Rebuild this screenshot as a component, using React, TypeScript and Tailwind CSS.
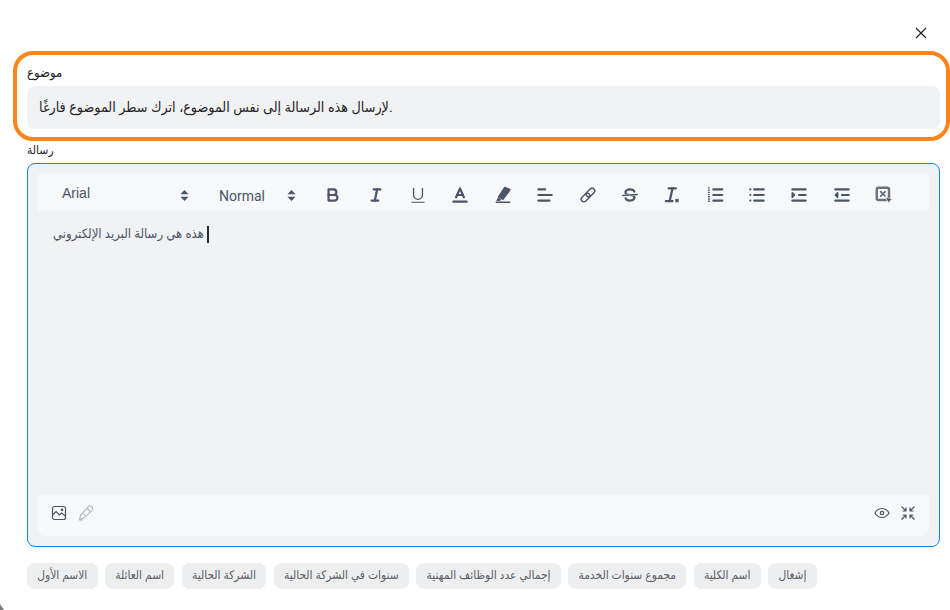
import type { ReactNode } from 'react';

const font = "font-['Roboto','DejaVu_Sans_Condensed',sans-serif]";

const chips = [
  'الاسم الأول',
  'اسم العائلة',
  'الشركة الحالية',
  'سنوات في الشركة الحالية',
  'إجمالي عدد الوظائف المهنية',
  'مجموع سنوات الخدمة',
  'اسم الكلية',
  'إشغال',
];

function Icon({ children }: { children: ReactNode }) {
  return (
    <svg viewBox="0 0 18 18" className="h-5 w-5 fill-none stroke-[#4a5568] stroke-2" strokeLinecap="round" strokeLinejoin="round">
      {children}
    </svg>
  );
}

const tools: ReactNode[] = [
  <>
    <path d="M5,4H9.5A2.5,2.5,0,0,1,12,6.5v0A2.5,2.5,0,0,1,9.5,9H5V4Z" />
    <path d="M5,9h5.5A2.5,2.5,0,0,1,13,11.5v0A2.5,2.5,0,0,1,10.5,14H5V9Z" />
  </>,
  <>
    <line x1="7" x2="13" y1="4" y2="4" />
    <line x1="5" x2="11" y1="14" y2="14" />
    <line x1="8" x2="10" y1="14" y2="4" />
  </>,
  <>
    <path strokeWidth="1.2" d="M5,3V9a4,4,0,0,0,4,4H9a4,4,0,0,0,4-4V3" />
    <rect x="3" y="15" width="12" height="1" rx="0.5" stroke="none" fill="#4a5568" />
  </>,
  <>
    <line x1="3" x2="15" y1="15" y2="15" />
    <polyline points="5.5 11 9 3 12.5 11" />
    <line x1="11.63" x2="6.38" y1="9" y2="9" />
  </>,
  <>
    <line x1="3" x2="15" y1="15.500" y2="15.500" strokeWidth="1.4" />
    <polygon points="10.5,2 15.5,4 14,6.500 9,13 5,10.500" fill="#4a5568" stroke="#4a5568" strokeWidth="1" />
    <polygon points="4.500,11 7.500,13 6,14.500 3,14.500" fill="#4a5568" stroke="none" />
  </>,
  <>
    <line x1="3" x2="15" y1="9" y2="9" />
    <line x1="3" x2="13" y1="14" y2="14" />
    <line x1="3" x2="9" y1="4" y2="4" />
  </>,
  <g strokeWidth="1.3">
    <rect x="2.300" y="8.800" width="9" height="4.800" rx="2.400" transform="rotate(-45 6.800 11.200)" />
    <rect x="6.700" y="4.400" width="9" height="4.800" rx="2.400" transform="rotate(-45 11.200 6.800)" />
  </g>,
  <>
    <line x1="15.5" x2="2.5" y1="8.5" y2="9.5" strokeWidth="1.3" />
    <path stroke="none" fill="#4a5568" d="M9.007,8C6.542,7.791,6,7.519,6,6.5,6,5.792,7.283,5,9,5c1.571,0,2.765.679,2.969,1.309a1,1,0,0,0,1.9-.617C13.356,4.106,11.354,3,9,3,6.2,3,4,4.538,4,6.5a3.2,3.2,0,0,0,.5,1.843Z" />
    <path stroke="none" fill="#4a5568" d="M8.984,10C11.457,10.208,12,10.479,12,11.5c0,.708-1.283,1.5-3,1.5-1.571,0-2.765-.679-2.969-1.309a1,1,0,1,0-1.9.617C4.644,13.894,6.646,15,9,15c2.8,0,5-1.538,5-3.5a3.2,3.2,0,0,0-.5-1.843Z" />
  </>,
  <>
    <line x1="6" x2="12.500" y1="3" y2="3" />
    <line x1="7" x2="9.500" y1="14" y2="3" />
    <line x1="3.500" x2="9.500" y1="14.500" y2="14.500" />
    <rect x="12" y="12.500" width="3" height="3" stroke="none" fill="#4a5568" />
  </>,
  <>
    <line x1="7.500" x2="15.500" y1="4" y2="4" />
    <line x1="7.500" x2="15.500" y1="9" y2="9" />
    <line x1="7.500" x2="15.500" y1="14" y2="14" />
    <line x1="3.500" x2="3.500" y1="2" y2="16" strokeWidth="1.6" strokeDasharray="1.2 0.8" strokeLinecap="butt" />
  </>,
  <>
    <line x1="6.500" x2="15" y1="4" y2="4" />
    <line x1="6.500" x2="15" y1="9" y2="9" />
    <line x1="6.500" x2="15" y1="14" y2="14" />
    <line x1="3" x2="3" y1="4" y2="4" />
    <line x1="3" x2="3" y1="9" y2="9" />
    <line x1="3" x2="3" y1="14" y2="14" />
  </>,
  <>
    <line x1="3" x2="15" y1="14" y2="14" />
    <line x1="3" x2="15" y1="4" y2="4" />
    <line x1="9" x2="15" y1="9" y2="9" />
    <polyline points="3 7 3 11 5 9 3 7" fill="#4a5568" strokeWidth="1.500" />
  </>,
  <>
    <line x1="3" x2="15" y1="14" y2="14" />
    <line x1="3" x2="15" y1="4" y2="4" />
    <line x1="9" x2="15" y1="9" y2="9" />
    <polyline points="5 7 5 11 3 9 5 7" fill="#4a5568" strokeWidth="1.500" />
  </>,
  <>
    <rect x="2.500" y="2.500" width="11" height="11" rx="1.500" stroke="#6b7280" strokeWidth="2.200" />
    <line x1="6" x2="10" y1="6" y2="10" stroke="#6b7280" strokeWidth="1.600" />
    <line x1="10" x2="6" y1="6" y2="10" stroke="#6b7280" strokeWidth="1.600" />
    <polygon points="10.500,10.500 16.500,13 14.500,14 13.500,16.500" fill="#4a5568" stroke="#f7f8fa" strokeWidth="0.600" />
  </>,
];

function SortArrows() {
  return (
    <svg viewBox="0 0 10 12" className="h-[11px] w-[9px] fill-[#4a5568]">
      <path d="M5 0 9.500 4.500H0.500Z" />
      <path d="M5 12 0.500 7.500H9.500Z" />
    </svg>
  );
}

export default function App() {
  return (
    <div className={`relative h-[610px] w-[950px] overflow-hidden bg-white ${font}`}>
      <div className="flex justify-end pt-[27px] pr-[23px]">
        <button aria-label="close" className="h-3 w-3 text-[#1f2328]">
          <svg viewBox="0 0 12 12" className="h-3 w-3 fill-none stroke-current stroke-[1.2]">
            <path d="M1 1 11 11M11 1 1 11" />
          </svg>
        </button>
      </div>

      <div className="mt-3 ml-[13px] flex h-[90px] flex-col rounded-[20px] border-4 border-[#ff8419] pt-[10px] pr-[6px] pl-[10px]">
        <label className="text-[13px] leading-4 text-[#1f2328]">موضوع</label>
        <div className="mt-[5px] flex h-[43px] items-center rounded-lg bg-[#f1f2f4] px-3 pt-px text-[14.2px] text-[#1f2328]">
          لإرسال هذه الرسالة إلى نفس الموضوع، اترك سطر الموضوع فارغًا.
        </div>
      </div>

      <div className="px-[10px] pl-[27px]">
        <label className="mt-px mb-[5px] block text-xs leading-4 text-[#1f2328]">رسالة</label>
        <div className="flex h-[384px] w-[913px] flex-col rounded-lg border border-[#0a84ff] bg-[#f1f2f4] p-[10px]">
          <div className="flex h-[37px] items-center bg-[#f7f8fa] pt-[5px] text-sm text-[#4a5568]">
            <div className="flex w-[157px] items-center justify-between pr-[6px] pl-6">
              <span className="-translate-y-[2px] font-['Liberation_Sans',sans-serif]">Arial</span>
              <SortArrows />
            </div>
            <div className="flex w-[117px] items-center justify-between pr-4 pl-6">
              <span className="translate-y-[1px]">Normal</span>
              <SortArrows />
            </div>
            {tools.map((t, i) => (
              <button key={i} className="flex h-full w-[42.4px] items-center justify-center">
                <Icon>{t}</Icon>
              </button>
            ))}
          </div>

          <div className="flex-1 px-[15px] pt-[14px] text-[13px] leading-[18px] text-[#4a5568]">
            <span>هذه هي رسالة البريد الإلكتروني</span>
            <span className="ml-[3px] inline-block h-[17px] w-[2.5px] bg-[#1f2a44] align-middle" />
          </div>

          <div className="flex h-[41px] items-center justify-between rounded-b-lg bg-[#f7f8fa] px-[13px] pb-[6px]">
            <div className="flex items-center gap-[11px]">
              <svg viewBox="0 0 16 16" className="h-4 w-4 fill-none stroke-[#4b5563] stroke-[1.2]">
                <rect x="1.500" y="1.500" width="13" height="13" rx="2" />
                <path d="M1.500 10 5 6.500 8.500 10 10.500 8 14.500 11" />
                <circle cx="11" cy="4.800" r="0.800" />
              </svg>
              <svg viewBox="0 0 16 16" className="h-[17px] w-[17px] fill-none stroke-[#b5b8bd] stroke-[1.1]">
                <path d="M1.500 14.500 2.500 10.500 9.500 2.800a2.400 2.400 0 0 1 3.800 3L6 13Z" />
                <path d="M8.500 4 12 7.500M5 9 7 11M1 15H4.500" />
              </svg>
            </div>
            <div className="flex items-center gap-[10px]">
              <svg viewBox="0 0 16 16" className="h-4 w-4 fill-none stroke-[#4b5563] stroke-[1.2]">
                <path d="M1 8C3 4.500 5.500 3.500 8 3.500S13 4.500 15 8C13 11.500 10.500 12.500 8 12.500S3 11.500 1 8Z" />
                <circle cx="8" cy="8" r="1.700" />
              </svg>
              <svg viewBox="0 0 16 16" className="h-4 w-4 fill-none stroke-[#4b5563] stroke-[1.2]">
                <path d="M1.500 1.500 6 6M6 2.500V6H2.500M14.500 1.500 10 6M10 2.500V6H13.500M1.500 14.500 6 10M6 13.500V10H2.500M14.500 14.500 10 10M10 13.500V10H13.500" />
              </svg>
            </div>
          </div>
        </div>

        <div className="mt-4 flex gap-[7.5px]">
          {chips.map((c) => (
            <button key={c} className="h-[26px] rounded-lg bg-[#edeef0] px-[10.2px] text-[11.9px] whitespace-nowrap text-[#5b5f66]">
              {c}
            </button>
          ))}
        </div>
      </div>

      <svg viewBox="0 0 4 6" className="absolute bottom-0 left-0 h-[6px] w-1 fill-[#7a7a7a]">
        <path d="M0 0 4 6H0Z" />
      </svg>
    </div>
  );
}
